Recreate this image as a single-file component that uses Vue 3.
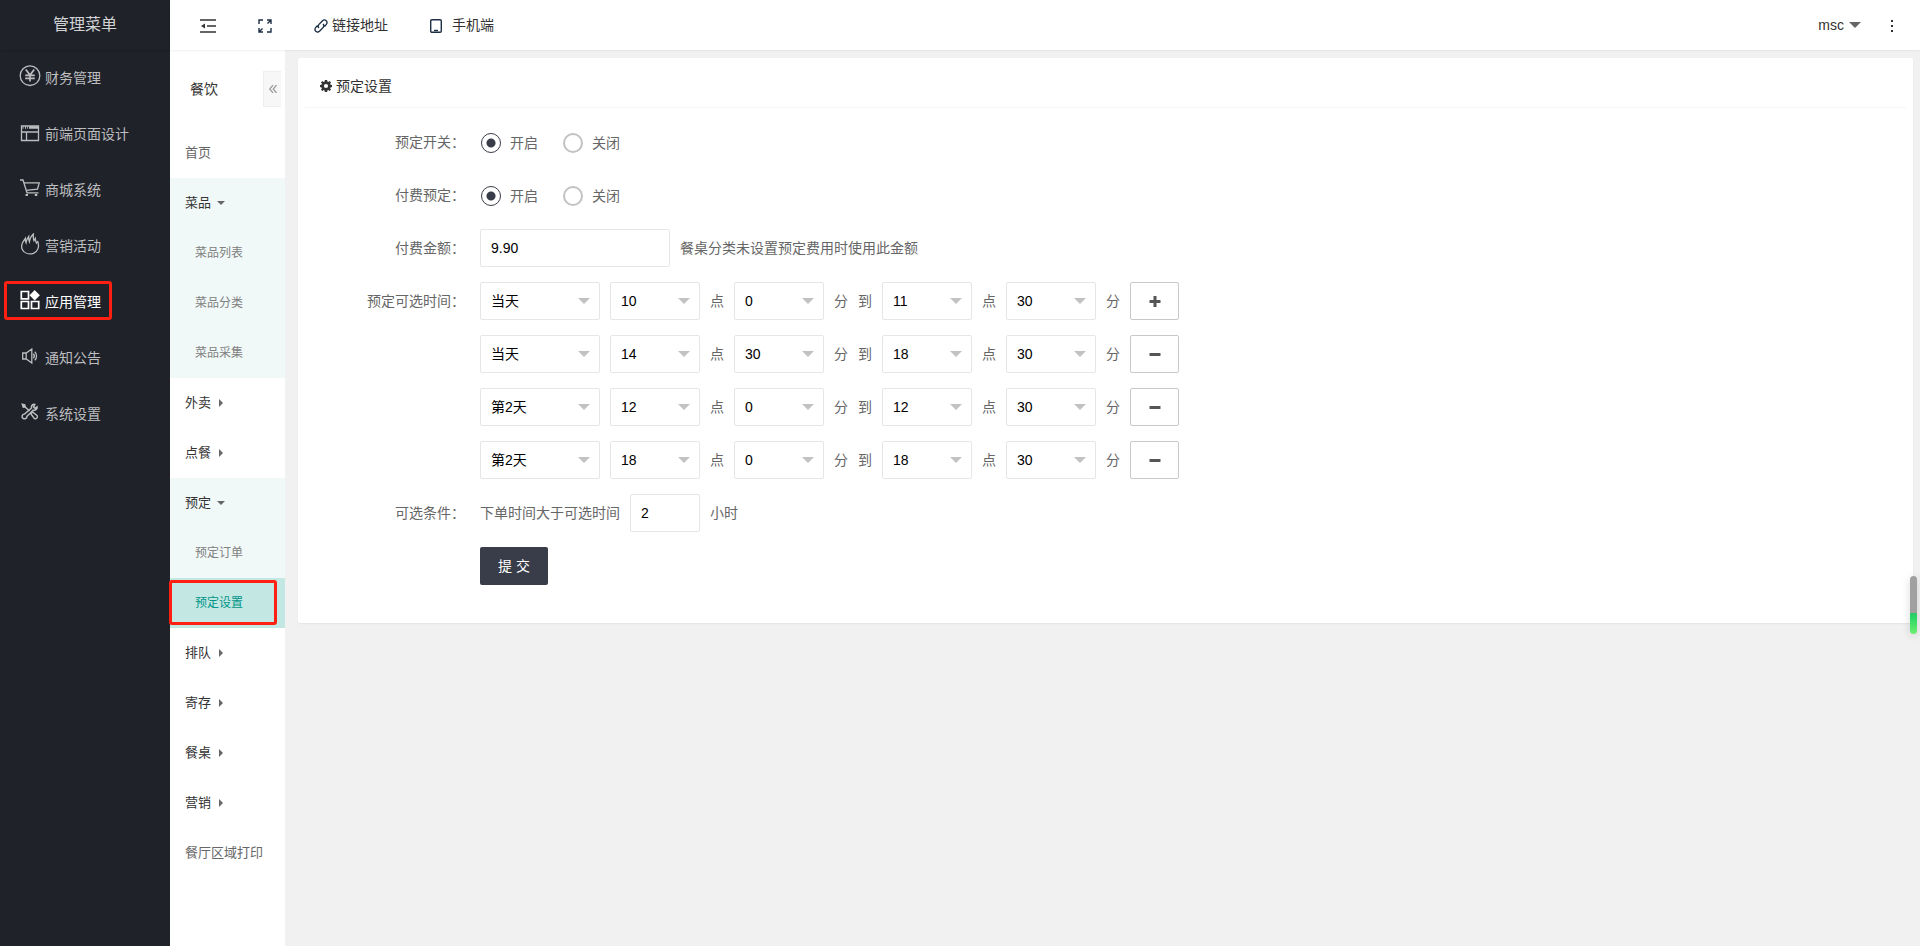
<script setup>
import { reactive, ref } from 'vue'

const modules = [
  { id: 'finance', name: '财务管理' },
  { id: 'design', name: '前端页面设计' },
  { id: 'mall', name: '商城系统' },
  { id: 'marketing', name: '营销活动' },
  { id: 'apps', name: '应用管理', active: true },
  { id: 'notice', name: '通知公告' },
  { id: 'system', name: '系统设置' },
]

const menu = [
  { name: '首页', plain: true },
  { name: '菜品', children: ['菜品列表', '菜品分类', '菜品采集'] },
  { name: '外卖' },
  { name: '点餐' },
  { name: '预定', children: ['预定订单', '预定设置'] },
  { name: '排队' },
  { name: '寄存' },
  { name: '餐桌' },
  { name: '营销' },
  { name: '餐厅区域打印', plain: true },
]
const current = '预定设置'

const switches = reactive([
  { id: 'booking', label: '预定开关：', value: 'on' },
  { id: 'paid', label: '付费预定：', value: 'on' },
])
const amount = ref('9.90')
const leadHours = ref('2')
const slots = reactive([
  { day: '当天', h1: 10, m1: 0, h2: 11, m2: 30 },
  { day: '当天', h1: 14, m1: 30, h2: 18, m2: 30 },
  { day: '第2天', h1: 12, m1: 0, h2: 12, m2: 30 },
  { day: '第2天', h1: 18, m1: 0, h2: 18, m2: 30 },
])
const days = ['当天', '第2天']
const hours = Array.from({ length: 24 }, (_, i) => i)
const minutes = [0, 30]
const parts = [
  { key: 'day', options: days, title: '日期', after: [] },
  { key: 'h1', options: hours, title: '开始点', after: ['点'] },
  { key: 'm1', options: minutes, title: '开始分', after: ['分', '到'] },
  { key: 'h2', options: hours, title: '结束点', after: ['点'] },
  { key: 'm2', options: minutes, title: '结束分', after: ['分'] },
]

function changeRow(i) {
  if (i === 0) slots.push({ day: '当天', h1: 10, m1: 0, h2: 11, m2: 30 })
  else slots.splice(i, 1)
}
</script>

<template>
  <div class="layout">
    <aside class="side">
      <div class="logo">管理菜单</div>
      <nav>
        <a v-for="m in modules" :key="m.id" href="#" class="module" :class="{ active: m.active }">
          <svg class="module-icon" viewBox="0 0 22 22" fill="none" stroke="currentColor" stroke-width="1.3">
            <g v-if="m.id === 'finance'">
              <circle cx="11" cy="10.700" r="9.800" />
              <path d="M6.800 4.500L11 10l4.200-5.500M11 10v6.500M6.200 10.300h9.600M6.200 13.300h9.600" stroke-width="1.700" />
            </g>
            <g v-else-if="m.id === 'design'">
              <path d="M2.500 5h17v14.500h-17zM2.500 11h17M7.500 11v8.500" />
              <path d="M10 6.500h9.500M3.500 6.500h1M6 6.500h1M8.200 6.500h.8" stroke-width="2.600" />
            </g>
            <g v-else-if="m.id === 'mall'">
              <path d="M1 3h3l4 12.800h11.500M4.900 5.900h15.300l-1.700 6.300-11.500 1.200" />
              <path d="M6.500 18h2.500M15.800 18h2.500" stroke-width="2.200" />
            </g>
            <path v-else-if="m.id === 'marketing'" d="M8 20.500C3.500 19 1.500 14.500 3.300 10.300 4 8.500 5 7 6.300 5.300c-.1 1.700.1 3.200.7 4.400.3-2.300 1.200-4.300 2.700-6.200-.1 1.800.1 3.700.7 5.200.4-3.100 1.800-5.700 4-7.700-.3 2.500-.1 4.700.6 6.700l1.300-2.200c.1 1.500.5 3 1.100 4.500l1.300-1.400c1.900 4.800.3 10-4.200 11.700-2 .8-4.500.8-6.500.2z" />
            <g v-else-if="m.id === 'apps'" stroke-width="1.700">
              <path d="M2.300 2.500h7.200v7.300h-7.200zM2.300 12.500h7.200v7h-7.200zM12.500 12.500h7.200v7h-7.200z" />
              <path d="M15.700 2.300l4 4-4 4-4-4z" fill="currentColor" />
            </g>
            <g v-else-if="m.id === 'notice'">
              <path d="M3.700 8h3.500L12.800 4v14l-5.600-4H3.700zM7.200 8v6M14.300 8.700c1.200 1.300 1.200 3.300 0 4.600M15.800 6.800c2.300 2.300 2.300 6.100 0 8.400" />
            </g>
            <g v-else>
              <path d="M4.500 4.500l6 5.500" stroke-width="1.600" />
              <path d="M3.200 3.200l2.600.6.4 2.200-2 .2z" fill="currentColor" />
              <path d="M11.800 12.800l1.800-1.800 4.600 3.800c.8 1.700-1 3.600-2.700 2.800z" stroke-width="1.400" />
              <path d="M15.800 3.400c-1.900-.6-4 1.300-3.300 3.600L5.500 13c-2.500.2-3.200 3-1.500 4.300 1.500 1.200 4 .3 4-2.100l6.300-6c2.300.6 4.200-1.300 3.800-3.300l-2 1.500-1.600-1.500z" stroke-width="1.500" />
            </g>
          </svg>
          <span>{{ m.name }}</span>
        </a>
      </nav>
    </aside>

    <div class="right">
      <header class="topbar">
        <button type="button" class="tool fold" aria-label="折叠菜单">
          <svg width="16" height="14" viewBox="0 0 16 14" fill="none" stroke="currentColor" stroke-width="1.400">
            <path d="M0 1h16M7 7h9M0 13h16" />
            <path d="M1 7l4-2.500v5z" fill="currentColor" stroke="none" />
          </svg>
        </button>
        <button type="button" class="tool full" aria-label="全屏">
          <svg width="14" height="14" viewBox="0 0 14 14" fill="none" stroke="currentColor" stroke-width="1.400">
            <path d="M1 5V1h4M9 1h4v4M13 9v4H9M5 13H1V9M13 1L9.500 4.500M1 13l3.500-3.500" />
          </svg>
        </button>
        <a href="#" class="tool link">
          <svg width="14" height="14" viewBox="0 0 14 14" fill="none" stroke="currentColor" stroke-width="1.400">
            <path d="M5 9c-1-1-1-2.500 0-3.600l3.300-3.500c1.200-1.200 2.800-1.200 3.900-.2s1.100 2.700 0 3.900L10.500 7.500M9 5c1 1 1 2.500 0 3.600l-3.300 3.500c-1.200 1.200-2.800 1.200-3.900.2s-1.100-2.700 0-3.900L3.500 6.500" />
          </svg>
          <span>链接地址</span>
        </a>
        <a href="#" class="tool phone">
          <svg width="12" height="14" viewBox="0 0 12 14" fill="none" stroke="currentColor" stroke-width="1.400">
            <rect x="0.700" y="0.700" width="10.600" height="12.600" rx="1.200" />
            <path d="M4 11.500h4" />
          </svg>
          <span>手机端</span>
        </a>
        <button type="button" class="tool user">
          <span>msc</span>
          <svg width="12" height="6" viewBox="0 0 12 6"><path d="M0 0h12L6 6z" fill="currentColor" /></svg>
        </button>
        <button type="button" class="tool more" aria-label="更多">
          <svg width="2" height="12" viewBox="0 0 2 12" fill="currentColor"><path d="M0 0h2v2H0zM0 5h2v2H0zM0 10h2v2H0z" /></svg>
        </button>
      </header>

      <div class="body">
        <aside class="sub">
          <div class="sub-head">
            <span>餐饮</span>
            <button type="button" class="collapse" aria-label="收起">
              <svg width="8" height="8" viewBox="0 0 8 8" fill="none" stroke="currentColor" stroke-width="1.200"><path d="M4 0L.7 4 4 8M7.500 0L4.200 4l3.300 4" /></svg>
            </button>
          </div>
          <nav>
            <div v-for="g in menu" :key="g.name" :class="{ open: g.children }">
              <a href="#" class="item" :class="{ plain: g.plain }">
                <span>{{ g.name }}</span>
                <i v-if="!g.plain" class="arrow" :class="{ down: g.children }"></i>
              </a>
              <a v-for="c in g.children" :key="c" href="#" class="item child" :class="{ current: c === current }">{{ c }}</a>
            </div>
          </nav>
        </aside>

        <main class="main">
          <section class="card">
            <h1 class="card-title">
              <svg width="12" height="12" viewBox="0 0 12 12" fill="currentColor">
                <path fill-rule="evenodd" d="M4.900 0h2.200l.3 1.600.9.400L9.700 1.100l1.300 1.300-.8 1.400.3.900L12 5v2l-1.500.4-.4.900.9 1.400-1.300 1.300-1.400-.9-.9.400L7.100 12H4.900l-.4-1.500-.8-.4-1.400.9L1 9.700l.9-1.400-.4-.9L0 7V5l1.500-.3.4-.9L1 2.400l1.300-1.300 1.400.9.900-.4zM6 3.900a2.100 2.100 0 100 4.200 2.100 2.100 0 000-4.200z" />
              </svg>
              <span>预定设置</span>
            </h1>
            <form class="form" @submit.prevent>
              <div v-for="s in switches" :key="s.id" class="row" role="radiogroup" :aria-labelledby="s.id">
                <span :id="s.id" class="label">{{ s.label }}</span>
                <div class="radios">
                  <label class="radio"><input v-model="s.value" type="radio" :name="s.id" value="on" />开启</label>
                  <label class="radio"><input v-model="s.value" type="radio" :name="s.id" value="off" />关闭</label>
                </div>
              </div>
              <div class="row">
                <label class="label" for="amount">付费金额：</label>
                <input id="amount" v-model="amount" class="text amount" type="text" />
                <span>餐桌分类未设置预定费用时使用此金额</span>
              </div>
              <div v-for="(slot, i) in slots" :key="i" class="row" role="group" aria-label="预定可选时间">
                <span class="label">{{ i === 0 ? '预定可选时间：' : '' }}</span>
                <template v-for="p in parts" :key="p.key">
                  <span class="select" :class="{ day: p.key === 'day' }">
                    <select v-model="slot[p.key]" :aria-label="p.title">
                      <option v-for="o in p.options" :key="o" :value="o">{{ o }}</option>
                    </select>
                  </span>
                  <span v-for="a in p.after" :key="a">{{ a }}</span>
                </template>
                <button type="button" class="step" :aria-label="i === 0 ? '添加' : '删除'" @click="changeRow(i)">
                  <svg width="12" height="12" viewBox="0 0 12 12" fill="none" stroke="currentColor" stroke-width="3">
                    <path :d="i === 0 ? 'M.5 6.500h11M6 1v11' : 'M.5 6.500h11'" />
                  </svg>
                </button>
              </div>
              <div class="row">
                <label class="label" for="lead">可选条件：</label>
                <span>下单时间大于可选时间</span>
                <input id="lead" v-model="leadHours" class="text hours" type="text" />
                <span>小时</span>
              </div>
              <div class="row">
                <span class="label"></span>
                <button type="submit" class="submit">提 交</button>
              </div>
            </form>
          </section>
        </main>
      </div>
    </div>
    <div class="meter"></div>
  </div>
</template>

<style>
body {
  margin: 0;
}
</style>

<style scoped>
.layout {
  display: flex;
  min-height: 100vh;
  background: #f1f1f1;
  color: #666;
  font: 14px/20px "Liberation Sans", "Noto Sans CJK SC", sans-serif;
}
.layout *,
.layout *::before,
.layout *::after {
  box-sizing: border-box;
}
a {
  color: inherit;
  text-decoration: none;
}
button,
input,
select {
  margin: 0;
  font: inherit;
}
svg {
  flex: none;
}
.side {
  flex: none;
  width: 170px;
  background: #20222a;
  color: #bcbdbf;
}
.logo {
  height: 50px;
  line-height: 50px;
  text-align: center;
  font-size: 16px;
  color: #d2d3d4;
  box-shadow: 0 1px 2px rgba(0, 0, 0, 0.15);
}
.module {
  position: relative;
  display: flex;
  align-items: center;
  gap: 4px;
  height: 56px;
  padding-left: 19px;
}
.module-icon {
  width: 22px;
  height: 22px;
  margin-bottom: 4px;
}
.module.active {
  color: #fff;
}
.module.active::after {
  content: "";
  position: absolute;
  left: 4px;
  top: 7px;
  width: 108px;
  height: 39px;
  border: 3px solid #ff2012;
  border-radius: 3px;
}
.right {
  flex: 1;
  min-width: 0;
  display: flex;
  flex-direction: column;
}
.topbar {
  position: relative;
  display: flex;
  align-items: center;
  height: 50px;
  padding: 0 27px 0 30px;
  background: #fff;
  color: #333;
  box-shadow: 0 1px 2px rgba(0, 0, 0, 0.06);
}
.tool {
  display: flex;
  align-items: center;
  padding: 0;
  border: 0;
  background: none;
  color: #333;
}
.tool svg {
  margin-top: 2px;
}
.full,
.link,
.phone {
  margin-left: 42px;
}
.full svg,
.link svg,
.phone svg {
  color: #1d2f45;
}
.link {
  gap: 4px;
}
.phone {
  gap: 10px;
}
.user {
  gap: 5px;
  margin-left: auto;
}
.user svg {
  margin-top: 0;
  color: #666;
}
.more {
  margin-left: 30px;
}
.body {
  flex: 1;
  display: flex;
}
.sub {
  flex: none;
  width: 115px;
  background: #fff;
}
.sub-head {
  display: flex;
  align-items: center;
  justify-content: space-between;
  height: 78px;
  padding: 0 4px 0 20px;
  color: #333;
}
.collapse {
  display: flex;
  align-items: center;
  justify-content: center;
  width: 18px;
  height: 36px;
  padding: 0;
  border: 1px solid #eee;
  border-right: 0;
  background: #f7f7f7;
  color: #999;
}
.open {
  background: #f0f9f8;
}
.item {
  position: relative;
  display: flex;
  align-items: center;
  gap: 6px;
  height: 50px;
  padding-left: 15px;
  font-size: 13px;
  color: #333;
}
.item.plain {
  color: #666;
}
.item.child {
  padding-left: 25px;
  font-size: 12px;
  color: #808080;
}
.item.current {
  background: #c3e7e3;
  color: #009688;
}
.item.current::after {
  content: "";
  position: absolute;
  left: -1px;
  top: 2px;
  width: 108px;
  height: 45px;
  border: 3px solid #ff2012;
  border-radius: 3px;
}
.arrow {
  margin-left: 2px;
  border: 4px solid transparent;
  border-left-color: #666;
  border-right-width: 0;
}
.arrow.down {
  margin-left: 0;
  border: 4px solid transparent;
  border-top-color: #666;
  border-bottom-width: 0;
}
.main {
  flex: 1;
  min-width: 0;
  padding: 8px 7px 8px 13px;
}
.card {
  padding: 0 7px 38px;
  border-radius: 2px;
  background: #fff;
  box-shadow: 0 1px 2px rgba(0, 0, 0, 0.06);
}
.card-title {
  display: flex;
  align-items: center;
  gap: 4px;
  height: 50px;
  margin: 0;
  padding: 6px 0 0 15px;
  border-bottom: 1px solid #f6f6f6;
  font-size: 14px;
  font-weight: 400;
  color: #333;
}
.form {
  display: flex;
  flex-direction: column;
  gap: 15px;
  padding-top: 15px;
}
.row {
  display: flex;
  align-items: center;
  gap: 10px;
  height: 38px;
}
.label {
  flex: none;
  width: 160px;
  margin-right: 5px;
  text-align: right;
}
.radios {
  display: flex;
  gap: 24px;
  padding-top: 2px;
}
.radio {
  display: flex;
  align-items: center;
  gap: 9px;
  padding-left: 1px;
}
.radio input {
  appearance: none;
  width: 20px;
  height: 20px;
  border: 2px solid #c2c2c2;
  border-radius: 50%;
}
.radio input:checked {
  border: 1px solid #393d49;
  background: radial-gradient(circle, #393d49 4px, transparent 5px);
}
.text,
select {
  height: 38px;
  border: 1px solid #e6e6e6;
  border-radius: 2px;
  background: #fff;
  color: #000;
  padding: 0 10px;
}
.amount {
  width: 190px;
}
.hours {
  width: 70px;
}
.select {
  position: relative;
  width: 90px;
}
.select.day {
  width: 120px;
}
.select::after {
  content: "";
  position: absolute;
  right: 10px;
  top: 16px;
  border: 6px solid transparent;
  border-top-color: #c2c2c2;
  border-bottom-width: 0;
  pointer-events: none;
}
select {
  appearance: none;
  display: block;
  width: 100%;
}
.step {
  display: flex;
  align-items: center;
  justify-content: center;
  width: 49px;
  height: 38px;
  border: 1px solid #c9c9c9;
  border-radius: 2px;
  background: #fff;
  color: #555;
}
.submit {
  width: 68px;
  height: 38px;
  padding: 0;
  border: 0;
  border-radius: 2px;
  background: #393d49;
  color: #fff;
}
.meter {
  position: fixed;
  right: 3px;
  top: 576px;
  width: 7px;
  height: 58px;
  border-radius: 4px;
  background: linear-gradient(#a0a0a0 37px, #2dc866 37px, #2dd866 42px, #6eee70);
  box-shadow: 0 2px 8px rgba(0, 0, 0, 0.15);
}
</style>
